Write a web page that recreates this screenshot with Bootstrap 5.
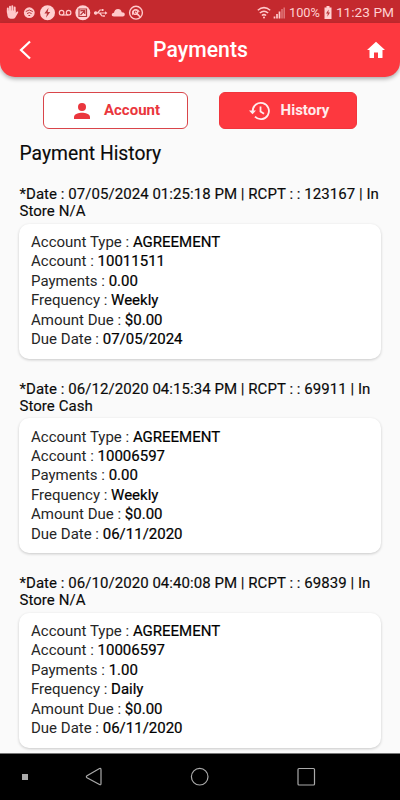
<!DOCTYPE html>
<html lang="en">
<head>
<meta charset="utf-8">
<meta name="viewport" content="width=device-width, initial-scale=1">
<title>Payments</title>
<link href="https://cdn.jsdelivr.net/npm/bootstrap@5.3.0/dist/css/bootstrap.min.css" rel="stylesheet">
<style>
body{font-family:Roboto,"Liberation Sans",sans-serif;background:#fafafa;color:#0a0a0a;height:800px}
svg{display:block;flex:none}
.status{height:23px;background:#c4292e;color:#ffd0d1;font-size:12.8px;padding:1px 6px 0 5px;line-height:23px}
.status-icons{gap:4px}
.clock{font-size:13.7px}
.topbar{height:54px;background:#fd383f;border-radius:0 0 15px 15px;box-shadow:0 2px 4px rgba(0,0,0,.32);padding:0 14px 0 17px}
.topbar h1{font-size:21.2px;font-weight:500;letter-spacing:.05px;line-height:54px}
.tabs{padding:15px 43px 0;height:52px}
.tab-btn{height:37px;border-radius:6px;font-size:15px;font-weight:700;padding:0;border:1px solid #d9454a;gap:14px}
.tab-account{width:145px;background:#fff;color:#ea363d;padding-left:3px}
.tab-history{width:138px;background:#fd383f;color:#ffeced;border-color:#f1353c;gap:11px;padding-left:2px}
.page-title{font-size:19.3px;font-weight:400;line-height:24px;padding:13px 0 0 19.5px;height:58.300px;-webkit-text-stroke:.15px #0a0a0a}
.record{height:194.5px;padding:0 19px 0 19px}
.stamp{font-size:15px;line-height:17px;height:37.500px;margin:0 0 0 .5px;white-space:nowrap;font-weight:400;letter-spacing:.05px;-webkit-text-stroke:.15px #0a0a0a}
.info{height:135px;border:0;border-radius:10px;padding:9.5px 12px;box-shadow:0 1px 3px rgba(0,0,0,.2)}
.info div{font-size:15px;line-height:19.45px;font-weight:400;color:#262626}
.info b{font-weight:400;color:#000;-webkit-text-stroke:.2px #000}
.navkeys{height:47px;background:#000;border-top:1px solid #777}
</style>
<script src="https://cdn.jsdelivr.net/npm/bootstrap@5.3.0/dist/js/bootstrap.bundle.min.js"></script>
</head>
<body class="d-flex flex-column overflow-hidden">
<div class="status d-flex align-items-center justify-content-between">
  <svg width="145" height="23" fill="none" stroke="#ffc9ca" stroke-width="1.2">
    <path d="M2.8 11.5V7.4M5 10.500V5.800M7.300 10V5.300M9.700 11V6.500" stroke-width="1.9" stroke-linecap="round"/>
    <path d="M1.800 9.500H10.600V12L12 10.600Q13.400 10 13.200 11.500L10.300 16.500Q9.500 17.700 8 17.700H5.500Q3 17.700 2.500 15Z" fill="#ffc9ca" stroke="none"/>
    <circle cx="24.300" cy="11.700" r="5.400" fill="#ffc9ca" stroke="none"/><path d="M20.800 10.500Q24.300 7.500 27.800 10.500M22 12.600Q24.300 10.600 26.600 12.600M23.400 14.500H25.200" stroke="#b8373b" stroke-width="1"/>
    <circle cx="42.500" cy="11.700" r="7.500" fill="#ffd0d1" stroke="none"/><path d="M43.500 6.800L39.400 12.500H42L41 16.700L45.200 10.900H42.700Z" fill="#b8373b" stroke="none"/>
    <circle cx="56.600" cy="11.700" r="2.300"/><circle cx="63.600" cy="11.700" r="2.300"/><path d="M56.600 14H63.600"/>
    <circle cx="77.800" cy="11.700" r="7.500" fill="#ffd0d1" stroke="none"/><path d="M74 8H81.500V15.500H74ZM75.500 14L79.700 9.700M76 10.500V9.700H79.700V13" stroke="#b8373b"/>
    <path d="M89.500 12H101M92.500 12L95 9H97.500M94.500 12L97 15H99"/><circle cx="90.700" cy="12" r="1.200" fill="#ffc9ca"/><path d="M100 10.200L102.500 12L100 13.800ZM97 8H98.500V10H97ZM98.500 14H99.700V16H98.500Z" fill="#ffc9ca" stroke="none"/>
    <path d="M109 15.500Q106.500 15.500 106.800 13.300Q107.200 11.700 109 11.800Q109.500 8 113 8Q116 8 116.700 11.200Q119.800 11.300 119.800 13.500Q119.700 15.500 117.800 15.500Z" fill="#ffc9ca" stroke="none"/>
    <circle cx="131" cy="11.700" r="6.400" stroke-width="1.400"/><path d="M134 14.500L130 10.700M128 14Q126.500 10 129.500 8.800Q133 7.800 134.200 11"/><circle cx="130.500" cy="11.200" r="2.200"/><path d="M131 12L135.300 16" stroke-width="1.600"/>
  </svg>
  <div class="d-flex align-items-center status-icons">
    <svg width="28" height="23" fill="none" stroke="#ffc9ca" stroke-width="1.500"><path d="M.8 9.200Q7 4 13.200 9.200M2.800 12Q7 8.400 11.200 12M4.900 14.500Q7 12.700 9.100 14.500"/><circle cx="7" cy="16.400" r="1" fill="#ffc9ca" stroke="none"/><path d="M17.500 17.500V15.500M20 17.500V13M22.500 17.500V10.500" stroke-width="1.700"/><path d="M25 17.500V8M27.200 17.500V6.500" stroke="#e0777a" stroke-width="1.500"/></svg>
    <span>100%</span>
    <svg width="8" height="23"><path d="M2.500 5H5.500V6.500H7.500V18H.5V6.500H2.500Z" fill="#ffd0d1"/><path d="M4.700 8.500L2 12.500H3.800L3.300 15.800L6 11.600H4.300Z" fill="#b8373b"/></svg>
    <span class="clock">11:23 PM</span>
  </div>
</div>
<header class="topbar d-flex align-items-center justify-content-between text-white">
  <svg width="18" height="22" fill="none" stroke="#fff" stroke-width="2.200"><path d="M13 2.500L4 11L13 19.500"/></svg>
  <h1 class="m-0">Payments</h1>
  <svg width="20" height="18" fill="#fff"><path d="M10 .8L19 9H16.500V16.500Q16.500 17 16 17H12V11.500H8V17H4Q3.500 17 3.500 16.500V9H1Z"/></svg>
</header>
<div class="tabs d-flex justify-content-between">
  <button class="btn tab-btn tab-account d-flex align-items-center justify-content-center"><svg width="16" height="16" fill="#ea363d"><circle cx="8" cy="4" r="4"/><path d="M0 16V14C0 11 5 9.800 8 9.800S16 11 16 14V16Z"/></svg>Account</button>
  <button class="btn tab-btn tab-history d-flex align-items-center justify-content-center"><svg width="21" height="20" fill="none" stroke="#ffeced" stroke-width="1.800"><path d="M3.700 10A8.100 8.100 0 1 1 6 15.700M11.500 5.500V10.500L15 12.700"/><path d="M0 9.500H7L3.500 13.200Z" fill="#ffeced" stroke="none"/></svg>History</button>
</div>
<h2 class="page-title m-0">Payment History</h2>
<main class="flex-grow-1 overflow-hidden">
  <section class="record"><p class="stamp">*Date : 07/05/2024 01:25:18 PM | RCPT : : 123167 | In<br>Store N/A</p>
    <div class="card info"><div>Account Type : <b>AGREEMENT</b></div><div>Account : <b>10011511</b></div><div>Payments : <b>0.00</b></div><div>Frequency : <b>Weekly</b></div><div>Amount Due : <b>$0.00</b></div><div>Due Date : <b>07/05/2024</b></div></div></section>
  <section class="record"><p class="stamp">*Date : 06/12/2020 04:15:34 PM | RCPT : : 69911 | In<br>Store Cash</p>
    <div class="card info"><div>Account Type : <b>AGREEMENT</b></div><div>Account : <b>10006597</b></div><div>Payments : <b>0.00</b></div><div>Frequency : <b>Weekly</b></div><div>Amount Due : <b>$0.00</b></div><div>Due Date : <b>06/11/2020</b></div></div></section>
  <section class="record"><p class="stamp">*Date : 06/10/2020 04:40:08 PM | RCPT : : 69839 | In<br>Store N/A</p>
    <div class="card info"><div>Account Type : <b>AGREEMENT</b></div><div>Account : <b>10006597</b></div><div>Payments : <b>1.00</b></div><div>Frequency : <b>Daily</b></div><div>Amount Due : <b>$0.00</b></div><div>Due Date : <b>06/11/2020</b></div></div></section>
</main>
<footer class="navkeys flex-shrink-0">
  <svg width="400" height="46" fill="none" stroke="#aaa" stroke-width="1.200"><path d="M22 20H28V26H22Z" fill="#aaa" stroke="none"/><path d="M99.500 14.500Q101 14 101 15.800V29.500Q101 31.300 99.500 30.500L87 23.800Q85.700 22.700 87 21.700Z"/><circle cx="199.700" cy="22.700" r="8.300"/><rect x="298" y="14.500" width="16.500" height="16.500" rx="1"/></svg>
</footer>
</body>
</html>
